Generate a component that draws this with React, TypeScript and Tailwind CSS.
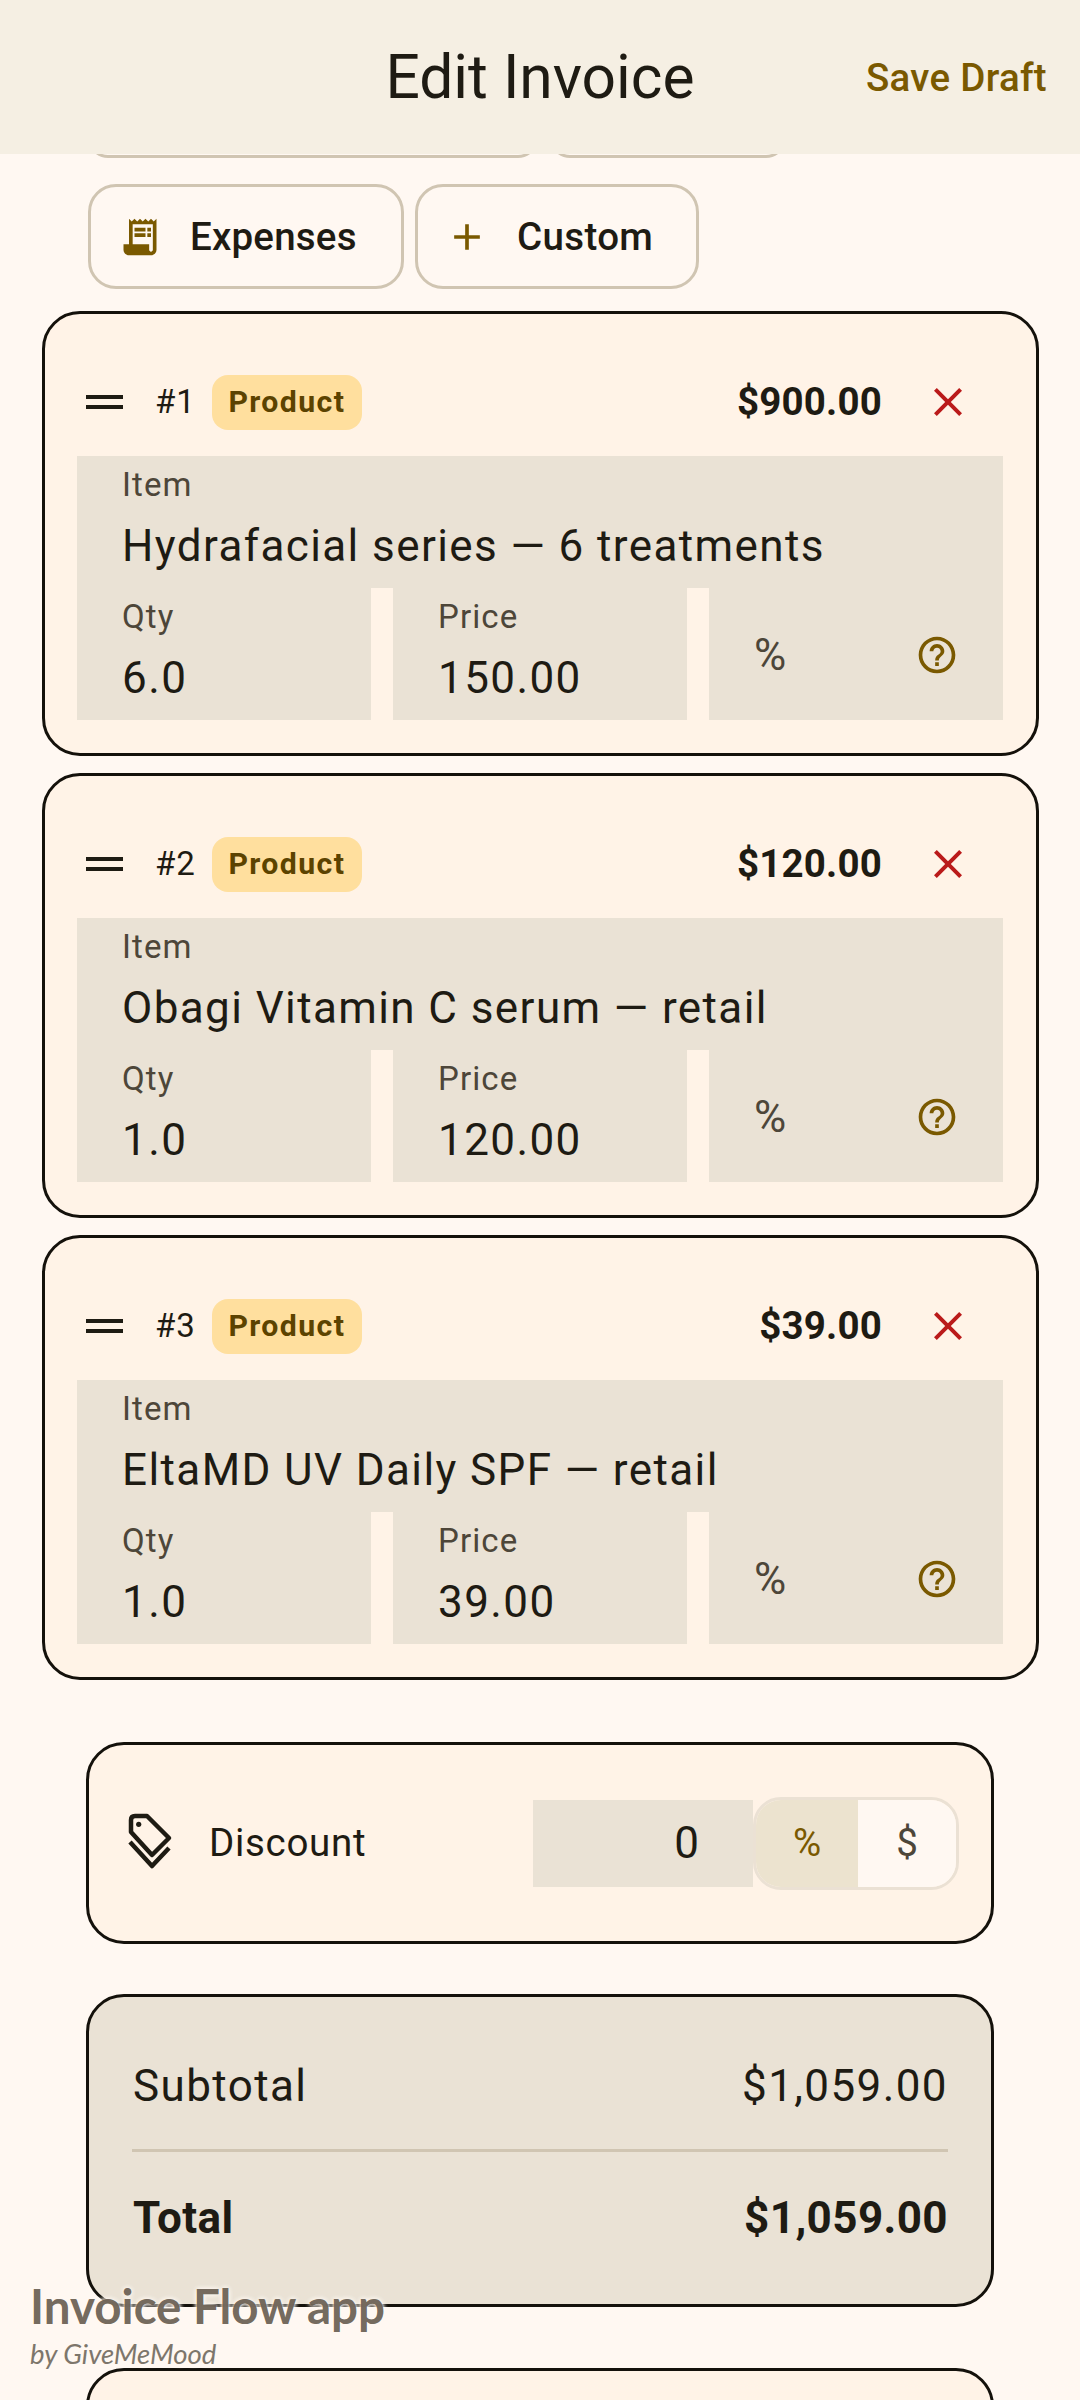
import { MdAdd, MdClose, MdHelpOutline, MdReceiptLong } from "react-icons/md";

const items = [
    { id: 1, name: "Hydrafacial series — 6 treatments", qty: "6.0", price: "150.00", total: "$900.00" },
    { id: 2, name: "Obagi Vitamin C serum — retail", qty: "1.0", price: "120.00", total: "$120.00" },
    { id: 3, name: "EltaMD UV Daily SPF — retail", qty: "1.0", price: "39.00", total: "$39.00" },
];

function Field({ label, value }: { label: string; value: string }) {
    return (
        <div className="h-[132px] bg-[#eae2d5] pl-[45px] pt-[7px]">
            <p className="text-[33px] leading-[44px] tracking-[1.1px] text-[#4d4639]">{label}</p>
            <p className="mt-[6px] text-[44px] leading-[66px] tracking-[1.4px] text-[#1e1b13]">{value}</p>
        </div>
    );
}

function ItemCard({ item }: { item: (typeof items)[number] }) {
    return (
        <div className="h-[445px] rounded-[38px] border-[3px] border-[#14110b] bg-[#fff3e7] pl-[32px] pr-[33px]">
            {/* header row */}
            <div className="flex h-[142px] items-center pl-[9px] pt-[34px]">
                <div className="flex w-[37px] flex-col gap-[6px]">
                    <div className="h-[4px] bg-[#1e1b13]" />
                    <div className="h-[4px] bg-[#1e1b13]" />
                </div>
                <span className="ml-[32px] text-[33px] tracking-[1px] text-[#1e1b13]">#{item.id}</span>
                <span className="ml-[16px] flex h-[55px] w-[150px] items-center justify-center rounded-[16px] bg-[#ffdf9e] text-[30.25px] font-bold tracking-[1.375px] text-[#5c4300]">
                    Product
                </span>
                <span className="ml-auto text-[38.5px] font-bold tracking-[0.2px] text-[#1e1b13]">{item.total}</span>
                <MdClose className="ml-[42px] mr-[31px] text-[#ba1a1a]" size={48} />
            </div>
            <div className="h-[132px] bg-[#eae2d5] pl-[45px] pt-[7px]">
                <p className="text-[33px] leading-[44px] tracking-[1.1px] text-[#4d4639]">Item</p>
                <p className="mt-[6px] text-[44px] leading-[66px] tracking-[1.4px] text-[#1e1b13]">{item.name}</p>
            </div>
            <div className="grid grid-cols-3 gap-x-[22px]">
                <Field label="Qty" value={item.qty} />
                <Field label="Price" value={item.price} />
                <div className="flex h-[132px] items-center justify-between bg-[#eae2d5] pl-[45px] pr-[44px] pt-[2px]">
                    <span className="text-[44px] text-[#4d4639]">%</span>
                    <MdHelpOutline className="text-[#7a5900]" size={44} />
                </div>
            </div>
        </div>
    );
}

export default function App() {
    return (
        <div className="relative h-[2400px] overflow-hidden bg-[#fff8f2] font-['Roboto',sans-serif]">
            {/* Top bar */}
            <div className="grid h-[154px] grid-cols-[1fr_auto_1fr] items-center bg-[#f5efe3] pt-[3px]">
                <div />
                <h1 className="text-[60.5px] font-normal text-[#1e1b13]">Edit Invoice</h1>
                <button className="justify-self-end pb-[2px] pr-[33px] text-[38.5px] font-medium tracking-[0.3px] text-[#7a5900]">Save Draft</button>
            </div>

            {/* previous row of chips, scrolled under the bar */}
            <div className="flex h-[4px] items-end gap-[12px] overflow-hidden pl-[88px]">
                <div className="h-[40px] w-[450px] shrink-0 rounded-[28px] border-[3px] border-[#d0c5b2]" />
                <div className="h-[40px] w-[236px] shrink-0 rounded-[28px] border-[3px] border-[#d0c5b2]" />
            </div>

            <div className="mt-[26px] flex gap-[11px] pl-[88px]">
                <button className="flex h-[105px] w-[316px] items-center rounded-[28px] border-[3px] border-[#d0c5b2] pl-[27px] text-[38.5px] font-medium tracking-[0.2px] text-[#1e1b13]">
                    <MdReceiptLong className="text-[#7a5900]" size={44} />
                    <span className="ml-[28px] pt-[1px]">Expenses</span>
                </button>
                <button className="flex h-[105px] w-[284px] items-center rounded-[28px] border-[3px] border-[#d0c5b2] pl-[27px] text-[38.5px] font-medium tracking-[0.2px] text-[#1e1b13]">
                    <MdAdd className="text-[#7a5900]" size={44} />
                    <span className="ml-[28px] pt-[1px] tracking-[0.35px]">Custom</span>
                </button>
            </div>

            {/* Line items */}
            <div className="mt-[22px] flex flex-col gap-[17px] pl-[42px] pr-[41px]">
                {items.map((item) => (
                    <ItemCard key={item.id} item={item} />
                ))}
            </div>

            {/* Discount */}
            <div className="ml-[86px] mr-[86px] mt-[62px] flex h-[202px] items-center rounded-[38px] border-[3px] border-[#14110b] bg-[#fff3e7] pl-[27px]">
                <svg className="mb-[6px]" width="70" height="80" viewBox="0 0 70 80" fill="none" stroke="#1e1b13" strokeWidth="4.5" strokeLinejoin="round">
                    <path d="M15 20Q15 16 19 16H31L53 38L36 55L15 32Z" />
                    <path d="M14 42L36 66L53 48" />
                    <circle cx="22.7" cy="24.3" r="2.6" fill="#1e1b13" stroke="none" />
                </svg>
                <span className="ml-[23px] text-[38.5px] tracking-[0.7px] text-[#1e1b13]">Discount</span>
                <div className="ml-auto flex h-[87px] w-[220px] items-center justify-end bg-[#eae2d5] pr-[54px] text-[44px] text-[#1e1b13]">0</div>
                <div className="mr-[32px] flex h-[93px] w-[206px] overflow-hidden rounded-[28px] border-[3px] border-[#ebe1d4]">
                    <div className="flex w-[102px] items-center justify-center bg-[#ece3cf] text-[38.5px] text-[#7a5900]">%</div>
                    <div className="flex flex-1 items-center justify-center bg-[#fff8f2] text-[38.5px] text-[#4d4639]">$</div>
                </div>
            </div>

            {/* Totals */}
            <div className="ml-[86px] mr-[86px] mt-[50px] h-[313px] rounded-[38px] border-[3px] border-[#14110b] bg-[#eae2d5] pl-[44px] pr-[43px]">
                <div className="flex h-[152px] items-center justify-between pt-[25px] text-[44px] tracking-[1.4px] text-[#1e1b13]">
                    <span>Subtotal</span>
                    <span>$1,059.00</span>
                </div>
                <div className="-ml-px h-[3px] bg-[#d0c5b2]" />
                <div className="flex h-[130px] items-center justify-between pt-[2px] text-[44px] font-bold tracking-[0.4px] text-[#1e1b13]">
                    <span>Total</span>
                    <span>$1,059.00</span>
                </div>
            </div>

            {/* next card, cut off by the window */}
            <div className="ml-[86px] mr-[86px] mt-[61px] h-[200px] rounded-[38px] border-[3px] border-[#14110b] bg-[#fff3e7]" />

            {/* Watermark */}
            <div className="absolute left-[30px] top-[2279px] font-['Lato',sans-serif] [text-shadow:0_0_5px_#fff8f2,0_0_5px_#fff8f2]">
                <p className="text-[47.5px] font-bold leading-[54px] text-[#62574a]/90">Invoice Flow app</p>
                <p className="mt-[4px] text-[27.5px] italic leading-[34px] text-[#7d766b]">by GiveMeMood</p>
            </div>
        </div>
    );
}
